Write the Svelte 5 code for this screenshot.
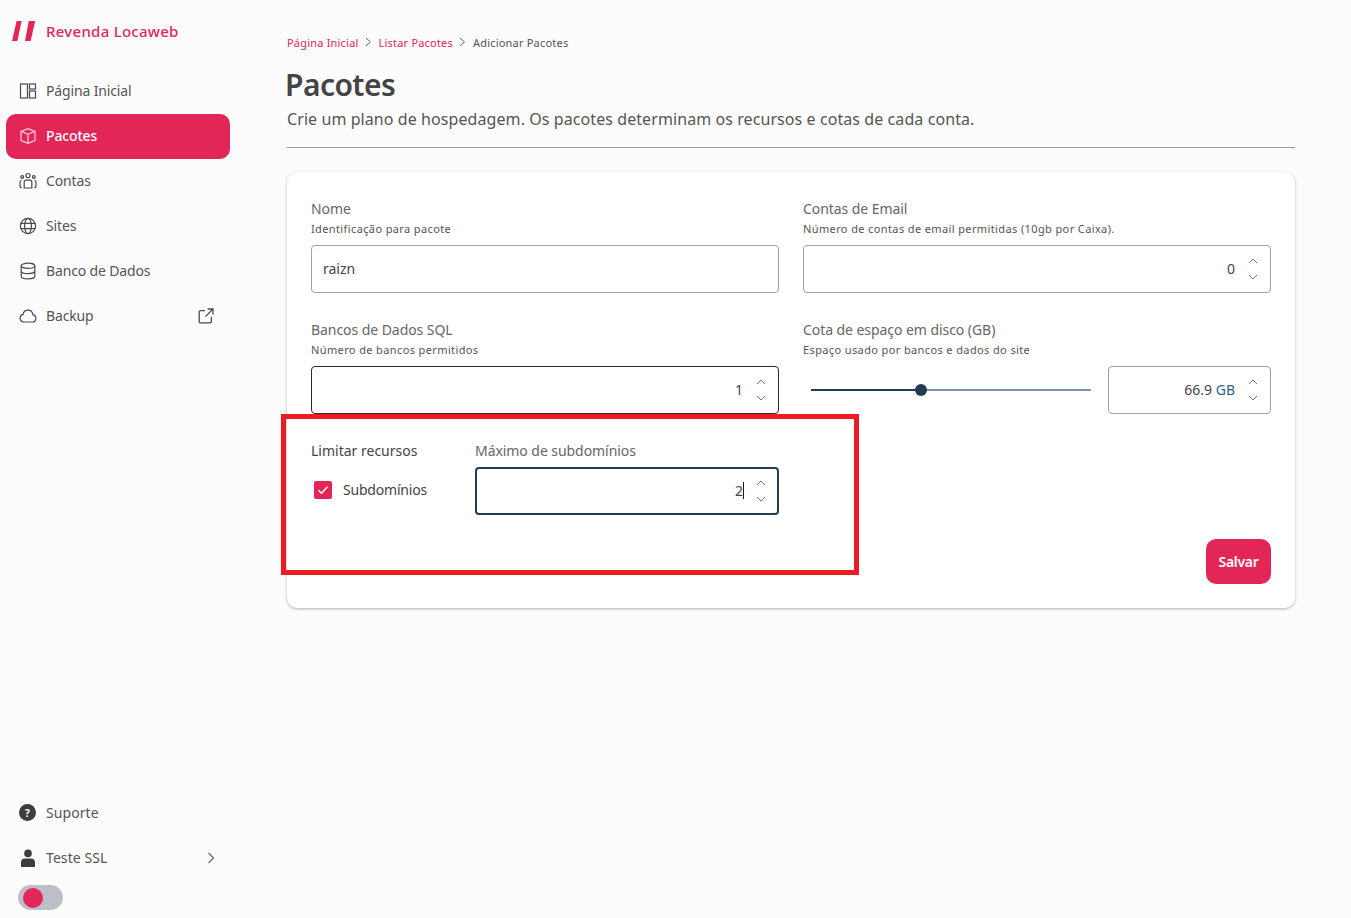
<script lang="ts">
  const nav = [
    { label: "Página Inicial", icon: "home" },
    { label: "Pacotes", icon: "box", active: true },
    { label: "Contas", icon: "users" },
    { label: "Sites", icon: "globe" },
    { label: "Banco de Dados", icon: "db" },
    { label: "Backup", icon: "cloud", external: true }
  ];
</script>

{#snippet spinner()}
  <span class="spin">
    <svg viewBox="0 0 10 6" width="10" height="6"><path d="M1 5l4-4 4 4" /></svg>
    <svg viewBox="0 0 10 6" width="10" height="6"><path d="M1 1l4 4 4-4" /></svg>
  </span>
{/snippet}

{#snippet navIcon(name)}
  <svg class="nav-icon" viewBox="0 0 18 18" width="18" height="18">
    {#if name === "home"}
      <rect x="1.5" y="2" width="7" height="14" />
      <rect x="10.5" y="2" width="6" height="5" />
      <rect x="10.5" y="9" width="6" height="7" />
    {:else if name === "box"}
      <path d="M9 1.6l7 2.8v9.2l-7 2.8-7-2.8V4.4z" />
      <path d="M2 4.4l7 2.8 7-2.8M9 7.2v9.2" />
    {:else if name === "users"}
      <circle cx="9" cy="3.6" r="2.1" />
      <circle cx="3.2" cy="5" r="1.4" />
      <circle cx="14.8" cy="5" r="1.4" />
      <path d="M5.2 16V10.2a2 2 0 0 1 2-2h3.6a2 2 0 0 1 2 2V16zM2.6 15.6c-1 0-1.6-.6-1.6-1.4V10c0-.9.6-1.5 1.6-1.5M15.4 15.6c1 0 1.6-.6 1.6-1.4V10c0-.9-.6-1.5-1.6-1.5" />
    {:else if name === "globe"}
      <circle cx="9" cy="9" r="7.6" />
      <ellipse cx="9" cy="9" rx="3.4" ry="7.6" />
      <path d="M1.8 6.4h14.4M1.8 11.6h14.4" />
    {:else if name === "db"}
      <ellipse cx="9" cy="3.8" rx="6.8" ry="2.6" />
      <path d="M2.2 3.8v10.4c0 1.5 3 2.6 6.8 2.6s6.8-1.1 6.8-2.6V3.8M2.2 9c0 1.5 3 2.6 6.8 2.6s6.8-1.1 6.8-2.6" />
    {:else}
      <path d="M4.8 15h8.4a3.6 3.6 0 0 0 .9-7.1C13.5 5 11.4 3.2 8.8 3.2 6.4 3.2 4.5 5 4.2 7.3A3.9 3.9 0 0 0 4.8 15z" />
    {/if}
  </svg>
{/snippet}

<div class="page">
  <aside class="sidebar">
    <div class="brand">
      <svg viewBox="0 0 24 20" width="24" height="20" class="logo">
        <path d="M4.6 0h5L5.4 20H0zM16.8 0h6.4l-4.6 20h-5.6z" />
      </svg>
      <span>Revenda Locaweb</span>
    </div>
    <nav class="nav">
      {#each nav as item}
        <div class="nav-item" class:active={item.active}>
          {@render navIcon(item.icon)}
          <span class="nav-label">{item.label}</span>
          {#if item.external}
            <svg class="ext" viewBox="0 0 16 16" width="16" height="16">
              <path d="M7 2.6H2.4a1.2 1.2 0 0 0-1.2 1.2v9.8A1.2 1.2 0 0 0 2.4 14.8h9.8a1.2 1.2 0 0 0 1.2-1.2V9M9.6 1h5.4v5.4M15 1L7.4 8.6" />
            </svg>
          {/if}
        </div>
      {/each}
    </nav>
    <div class="bottom">
      <div class="nav-item">
        <span class="help">?</span>
        <span class="nav-label">Suporte</span>
      </div>
      <div class="nav-item">
        <svg class="user" viewBox="0 0 16 18" width="16" height="18">
          <circle cx="8" cy="4.4" r="3.8" />
          <path d="M1 18v-4.6C1 11 2.6 9.6 4.6 9.6h6.8c2 0 3.6 1.4 3.6 3.8V18z" />
        </svg>
        <span class="nav-label">Teste SSL</span>
        <svg class="chev" viewBox="0 0 8 14" width="8" height="14"><path d="M1.5 2l5 5-5 5" /></svg>
      </div>
      <div class="toggle"><span class="knob"></span></div>
    </div>
  </aside>

  <main class="main">
    <div class="crumbs">
      <span class="link">Página Inicial</span>
      <svg viewBox="0 0 7 10" width="7" height="10"><path d="M1 1l4.5 4L1 9" /></svg>
      <span class="link">Listar Pacotes</span>
      <svg viewBox="0 0 7 10" width="7" height="10"><path d="M1 1l4.5 4L1 9" /></svg>
      <span>Adicionar Pacotes</span>
    </div>
    <h1>Pacotes</h1>
    <p class="lead">Crie um plano de hospedagem. Os pacotes determinam os recursos e cotas de cada conta.</p>
    <hr />

    <section class="card">
      <div class="grid">
        <div class="field">
          <div class="title">Nome</div>
          <div class="hint">Identificação para pacote</div>
          <div class="input left"><span class="val">raizn</span></div>
        </div>
        <div class="field">
          <div class="title">Contas de Email</div>
          <div class="hint">Número de contas de email permitidas (10gb por Caixa).</div>
          <div class="input"><span class="val">0</span>{@render spinner()}</div>
        </div>
        <div class="field">
          <div class="title">Bancos de Dados SQL</div>
          <div class="hint">Número de bancos permitidos</div>
          <div class="input dark"><span class="val">1</span>{@render spinner()}</div>
        </div>
        <div class="field">
          <div class="title">Cota de espaço em disco (GB)</div>
          <div class="hint">Espaço usado por bancos e dados do site</div>
          <div class="quota">
            <div class="slider">
              <div class="track"></div>
              <div class="fill" style="width: {(110 / 280) * 100}%"></div>
              <div class="thumb" style="left: {(110 / 280) * 100}%"></div>
            </div>
            <div class="input small"><span class="val">66.9 <em>GB</em></span>{@render spinner()}</div>
          </div>
        </div>
      </div>

      <div class="limits">
        <div class="limit-left">
          <div class="limit-title">Limitar recursos</div>
          <label class="check">
            <span class="box">
              <svg viewBox="0 0 12 10" width="12" height="10"><path d="M1.5 5.2l3 3 6-6.5" /></svg>
            </span>
            Subdomínios
          </label>
        </div>
        <div class="limit-right">
          <div class="title">Máximo de subdomínios</div>
          <div class="input focused"><span class="val caret">2</span>{@render spinner()}</div>
        </div>
      </div>

      <div class="actions">
        <button class="save">Salvar</button>
      </div>
    </section>
  </main>

  <div class="highlight"></div>
</div>

<style>
  :global(body) {
    margin: 0;
    background: #fcfcfc;
  }

  .page {
    position: relative;
    display: flex;
    height: 918px;
    overflow: hidden;
    font-family: "Noto Sans", "Open Sans", sans-serif;
    color: #444;
  }

  .sidebar {
    display: flex;
    flex-direction: column;
    box-sizing: border-box;
    width: 236px;
    padding-left: 6px;
    flex-shrink: 0;
  }

  .brand {
    display: flex;
    align-items: center;
    gap: 10px;
    height: 24px;
    margin: 19px 0 0 6px;
    color: #e32658;
    font-size: 15px;
    font-weight: 500;
    letter-spacing: 0.27px;
  }

  .logo {
    fill: #e32658;
    flex-shrink: 0;
  }

  .nav {
    display: flex;
    flex-direction: column;
    margin-top: 26px;
  }

  .nav-item {
    display: flex;
    align-items: center;
    box-sizing: border-box;
    width: 224px;
    height: 45px;
    padding: 0 14px 0 13px;
    border-radius: 10px;
    font-size: 14px;
    color: #555;
    letter-spacing: -0.15px;
  }

  .nav .nav-item {
    padding-bottom: 2px;
  }

  .bottom .nav-item {
    letter-spacing: 0.08px;
  }

  .nav-item.active {
    background: #e32658;
    color: #fff;
    font-weight: 500;
  }

  .nav-icon {
    flex-shrink: 0;
    margin-right: 9px;
    fill: none;
    stroke: #4a4a4a;
    stroke-width: 1.2;
  }

  .active .nav-icon {
    stroke: #fbd0dc;
  }

  .nav-label {
    flex: 1;
  }

  .ext {
    fill: none;
    stroke: #4a4a4a;
    stroke-width: 1.3;
    margin-right: 2px;
  }

  .bottom {
    margin-top: auto;
    padding-bottom: 8px;
  }

  .help {
    display: flex;
    align-items: center;
    justify-content: center;
    width: 17px;
    height: 17px;
    margin: 0 10px 0 0;
    border-radius: 50%;
    background: #3d3d3d;
    color: #fff;
    font-size: 10px;
    font-weight: 700;
    letter-spacing: 0;
  }

  .user {
    margin: 0 10px 0 1px;
    fill: #3d3d3d;
    flex-shrink: 0;
  }

  .chev {
    fill: none;
    stroke: #666;
    stroke-width: 1.2;
    margin: 1px 1px 0 0;
  }

  .toggle {
    display: flex;
    align-items: center;
    width: 45px;
    height: 25px;
    margin: 5px 0 0 12px;
    padding-left: 5px;
    box-sizing: border-box;
    border-radius: 13px;
    background: #bcbfc8;
  }

  .knob {
    width: 20px;
    height: 20px;
    border-radius: 50%;
    background: #e32658;
  }

  .main {
    flex: 1;
    box-sizing: border-box;
    padding: 0 56px 0 51px;
  }

  .crumbs {
    display: flex;
    align-items: center;
    gap: 6.5px;
    height: 18px;
    margin-top: 33px;
    font-size: 11px;
    color: #555;
    letter-spacing: 0.2px;
  }

  .crumbs svg {
    fill: none;
    stroke: #666;
    stroke-width: 1;
  }

  .crumbs .link {
    color: #e32658;
  }

  h1 {
    margin: 13px 0 0 -2px;
    font-size: 30px;
    line-height: 42px;
    font-weight: 600;
    color: #444;
    letter-spacing: -0.55px;
  }

  .lead {
    margin: 1px 0 0;
    font-size: 16px;
    line-height: 24px;
    color: #555;
    letter-spacing: 0.08px;
  }

  hr {
    height: 1px;
    margin: 16px 0 24px;
    border: 0;
    background: #9a9aa4;
  }

  .card {
    box-sizing: border-box;
    height: 436px;
    padding: 27px 24px 24px;
    border-radius: 10px;
    background: #fff;
    box-shadow: 0 1px 3px rgba(0, 0, 0, 0.3);
  }

  .grid {
    display: grid;
    grid-template-columns: 1fr 1fr;
    column-gap: 24px;
    row-gap: 27px;
  }

  .title {
    font-size: 14px;
    line-height: 20px;
    color: #666;
    letter-spacing: -0.06px;
  }

  .hint {
    margin: 2px 0 8px;
    font-size: 11px;
    line-height: 16px;
    color: #555;
    letter-spacing: 0.38px;
  }

  .input {
    display: flex;
    align-items: center;
    justify-content: flex-end;
    box-sizing: border-box;
    height: 48px;
    padding: 0 12px 0 11px;
    border: 1px solid #a0a0a0;
    border-radius: 4px;
    font-size: 14px;
    color: #444;
    background: #fff;
  }

  .val {
    margin-bottom: 2px;
  }

  .input.left {
    justify-content: flex-start;
  }

  .input.dark {
    border-color: #2a2a2a;
  }

  .input.focused {
    border: 2px solid #1f3d58;
    height: 48px;
    padding: 0 11px;
    margin-top: 6px;
  }

  .input.small {
    width: 163px;
    flex-shrink: 0;
  }

  .caret {
    border-right: 1px solid #1a1a1a;
    line-height: 17px;
    margin-right: -1px;
  }

  .spin {
    display: flex;
    flex-direction: column;
    align-items: center;
    gap: 10px;
    margin-left: 13px;
    margin-right: 0;
  }

  .spin svg {
    fill: none;
    stroke: #777;
    stroke-width: 1;
    display: block;
  }

  .quota {
    display: flex;
    align-items: center;
    gap: 17px;
  }

  .slider {
    position: relative;
    flex: 1;
    height: 2px;
    margin-left: 8px;
  }

  .track {
    position: absolute;
    inset: 0;
    background: #7f92a3;
  }

  .fill {
    position: absolute;
    top: 0;
    bottom: 0;
    left: 0;
    background: #1f3d58;
  }

  .thumb {
    position: absolute;
    top: -5px;
    width: 12px;
    height: 12px;
    margin-left: -6px;
    border-radius: 50%;
    background: #1f3d58;
  }

  em {
    font-style: normal;
    color: #2f5f8a;
  }

  .limits {
    display: flex;
    margin-top: 27px;
  }

  .limit-left {
    width: 164px;
    flex-shrink: 0;
  }

  .limit-title {
    font-size: 14px;
    line-height: 20px;
    color: #444;
  }

  .check {
    display: flex;
    align-items: center;
    gap: 11px;
    margin: 19px 0 0 3px;
    font-size: 14px;
    color: #444;
    letter-spacing: -0.2px;
  }

  .box {
    display: flex;
    align-items: center;
    justify-content: center;
    width: 18px;
    height: 18px;
    border-radius: 2px;
    background: #e32658;
  }

  .box svg {
    fill: none;
    stroke: #fff;
    stroke-width: 1.5;
  }

  .limit-right {
    width: 304px;
  }

  .actions {
    display: flex;
    justify-content: flex-end;
    margin-top: 24px;
  }

  .save {
    width: 65px;
    height: 45px;
    border: 0;
    border-radius: 10px;
    background: #e32658;
    color: #fff;
    font-family: inherit;
    font-size: 14px;
    font-weight: 600;
    letter-spacing: -0.3px;
  }

  .highlight {
    position: absolute;
    left: 281px;
    top: 414px;
    box-sizing: border-box;
    width: 578px;
    height: 161px;
    border: 5px solid #ed1c24;
    pointer-events: none;
  }
</style>
